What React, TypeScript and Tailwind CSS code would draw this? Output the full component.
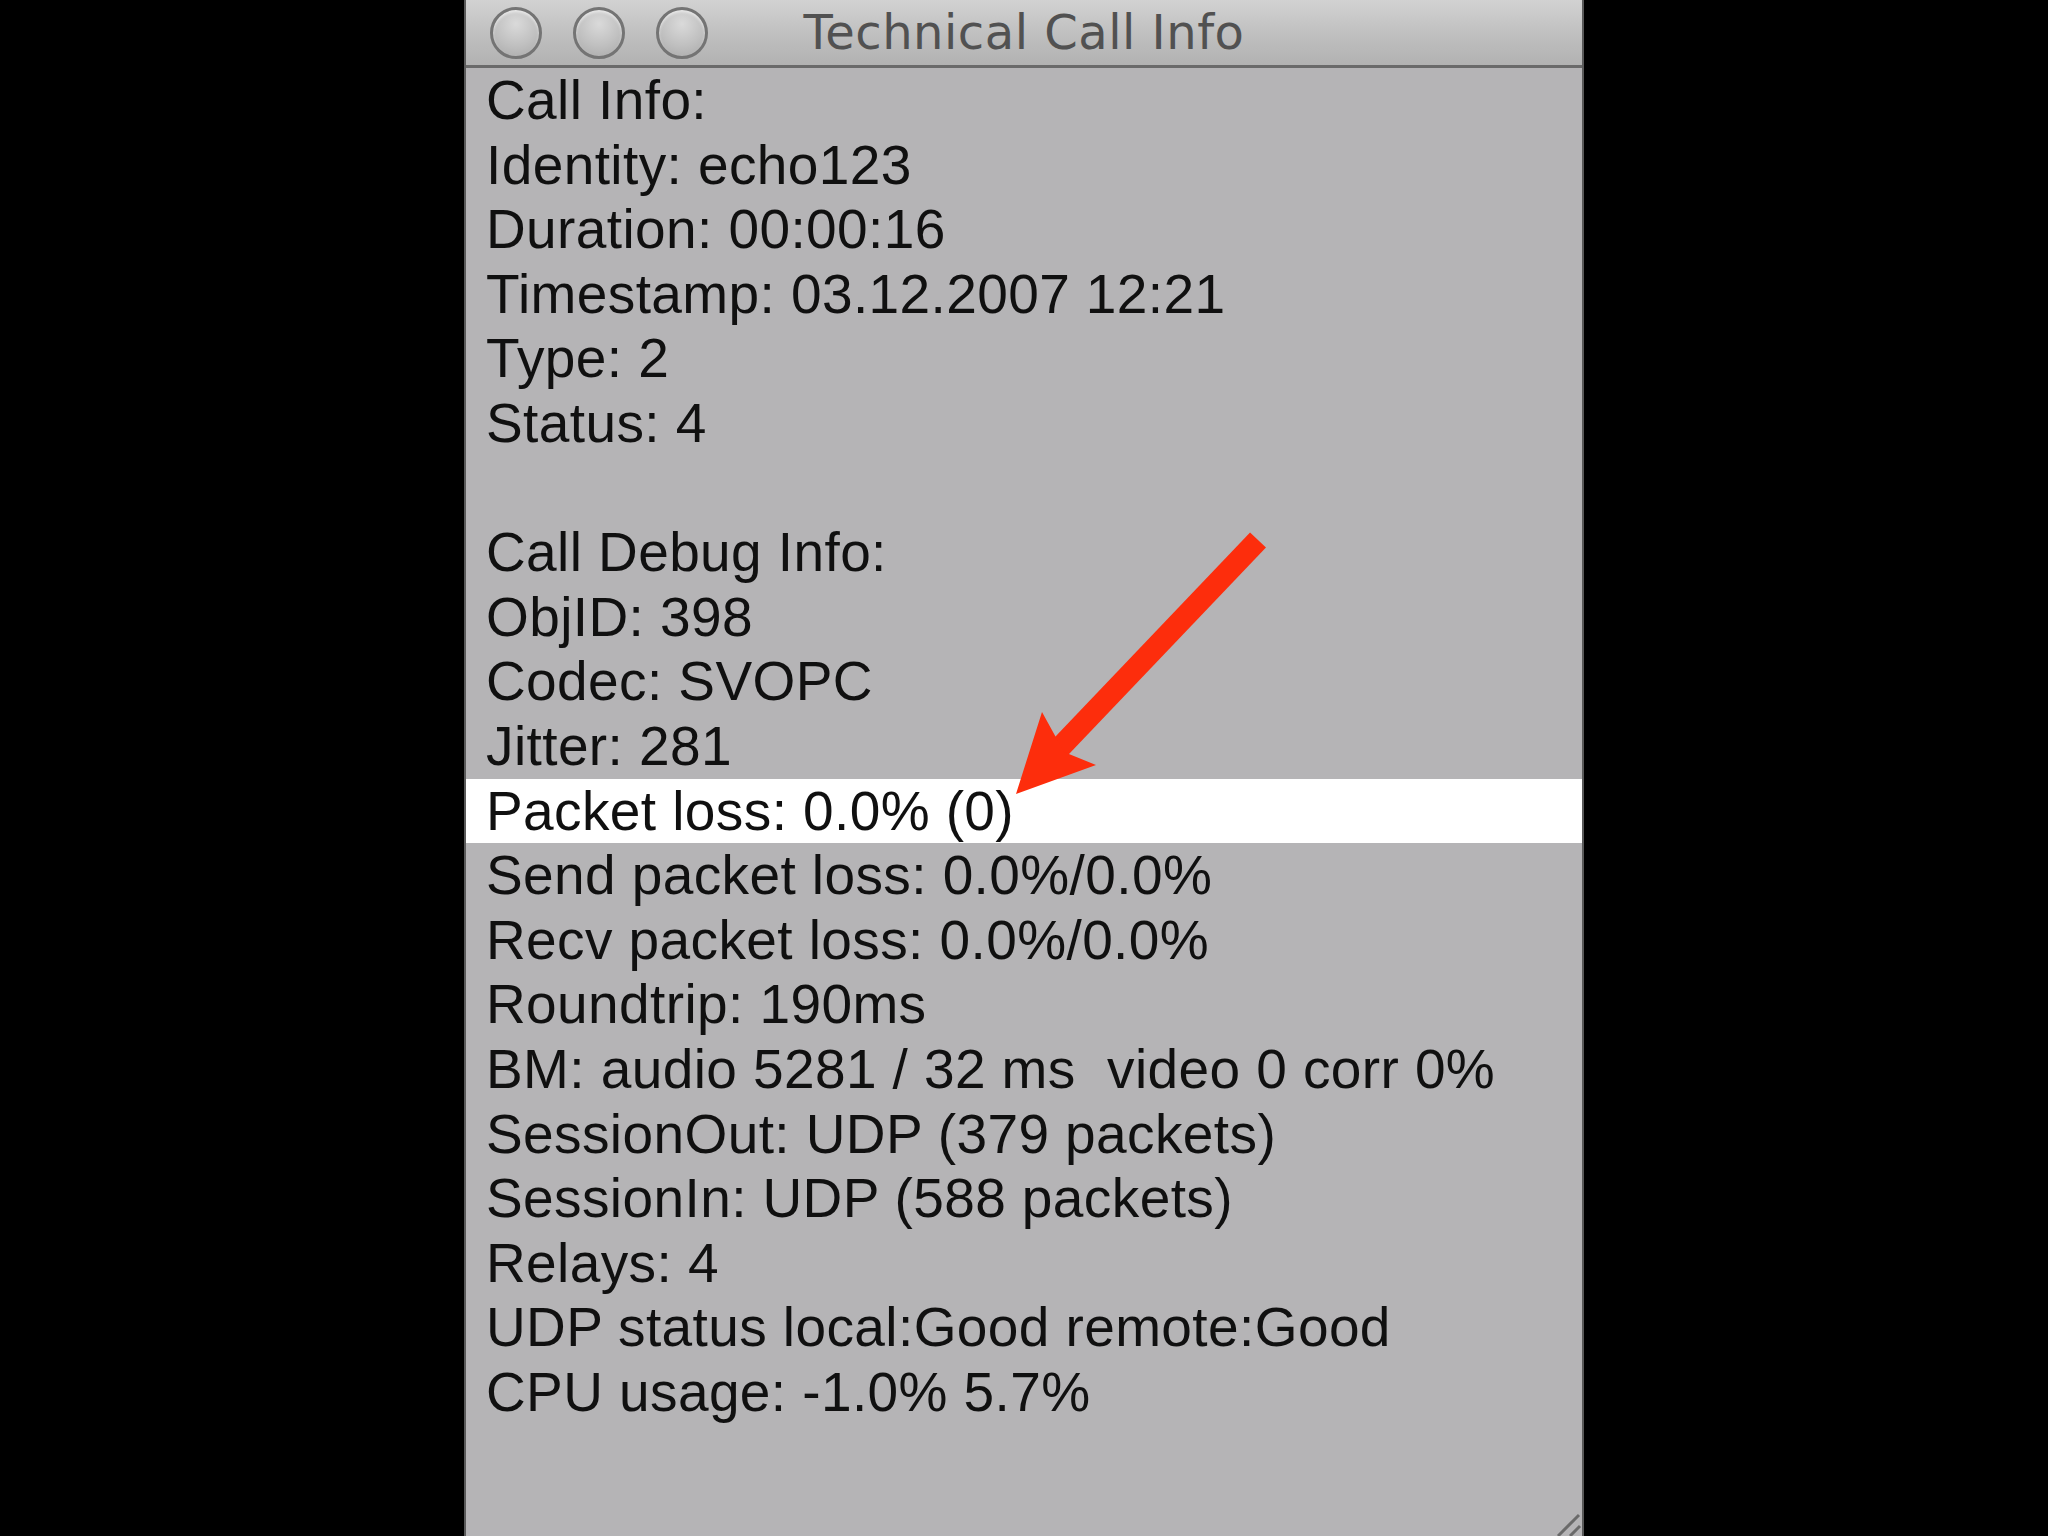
import React from "react";

const lines: string[] = [
  "Call Info:",
  "Identity: echo123",
  "Duration: 00:00:16",
  "Timestamp: 03.12.2007 12:21",
  "Type: 2",
  "Status: 4",
  "",
  "Call Debug Info:",
  "ObjID: 398",
  "Codec: SVOPC",
  "Jitter: 281",
  "Packet loss: 0.0% (0)",
  "Send packet loss: 0.0%/0.0%",
  "Recv packet loss: 0.0%/0.0%",
  "Roundtrip: 190ms",
  "BM: audio 5281 / 32 ms  video 0 corr 0%",
  "SessionOut: UDP (379 packets)",
  "SessionIn: UDP (588 packets)",
  "Relays: 4",
  "UDP status local:Good remote:Good",
  "CPU usage: -1.0% 5.7%",
];

function Btn() {
  return (
    <div className="w-[52px] h-[52px] rounded-full border-[3px] border-[#747474] bg-[radial-gradient(circle_at_50%_30%,#dadada_0%,#c0c0c0_55%,#a8a8a8_100%)] shadow-[inset_0_2px_3px_rgba(255,255,255,0.6)]" />
  );
}

export default function App() {
  return (
    <div className="relative w-[2048px] h-[1536px] bg-black overflow-hidden flex justify-center">
      <div className="w-[1120px] h-full flex flex-col bg-[#b5b4b6] border-x-2 border-[#5a5a5a]">
        <div className="relative h-[68px] shrink-0 flex items-center bg-[linear-gradient(#d2d2d2,#bdbdbd_60%,#b2b2b2)] border-b-[3px] border-[#6a6a6a]">
          <div className="flex items-center gap-[31px] pl-[24px]">
            <Btn />
            <Btn />
            <Btn />
          </div>
          <div className="absolute inset-0 flex items-center justify-center pb-[2px]">
            <span className="text-[48px] leading-none text-[#515151] tracking-[0.5px] font-[family-name:'DejaVu_Sans',sans-serif]">
              Technical Call Info
            </span>
          </div>
        </div>
        <div className="flex flex-col font-[family-name:'Liberation_Sans',Arial,sans-serif] text-[55px] leading-[64.6px] tracking-[0.4px] text-[#101010]">
          {lines.map((l, i) => (
            <div
              key={i}
              className={
                l.startsWith("Packet loss")
                  ? "h-[64.6px] pl-[20px] whitespace-pre bg-white"
                  : "h-[64.6px] pl-[20px] whitespace-pre"
              }
            >
              {l}
            </div>
          ))}
        </div>
      </div>
      <svg className="absolute inset-0" width="2048" height="1536" viewBox="0 0 2048 1536">
        <line x1="1258" y1="540" x2="1052" y2="756" stroke="#fd2d0c" strokeWidth="22" />
        <polygon points="1016,794 1042,712 1064,752 1096,765" fill="#fd2d0c" />
        <g stroke="#6a6a6a" strokeWidth="3">
          <line x1="1558" y1="1536" x2="1579" y2="1515" />
          <line x1="1570" y1="1536" x2="1580" y2="1526" />
        </g>
      </svg>
    </div>
  );
}
